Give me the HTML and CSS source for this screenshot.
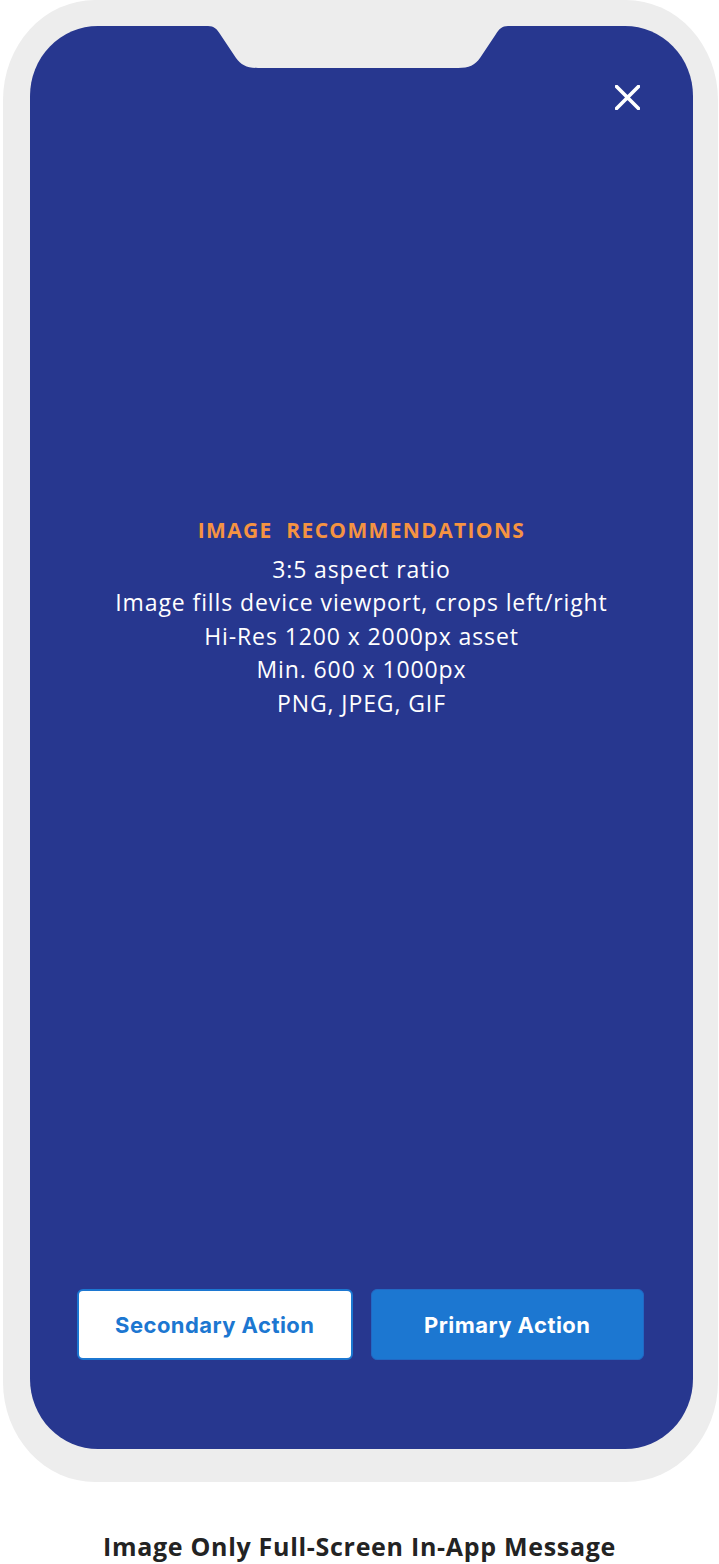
FILE: index.html
```html
<!DOCTYPE html>
<html lang="en">
<head>
<meta charset="utf-8">
<title>Image Only Full-Screen In-App Message</title>
<link rel="stylesheet" href="styles.css">
</head>
<body>
<div class="page">
  <div class="phone">
    <div class="screen">
      <svg class="notch" width="316" height="42" viewBox="0 0 316 42" aria-hidden="true">
        <path d="M0,0 H8 C14,0 17,3 20,8 L36,32 C41,39 47,42 58,42 H258 C269,42 275,39 280,32 L296,8 C299,3 302,0 308,0 H316 V-2 H0 Z" fill="#ededed"/>
      </svg>
      <div class="close-row">
        <svg class="close" width="25" height="25" viewBox="0 0 25 25" aria-label="Close">
          <path d="M1.5,1.5 L23.5,23.5 M23.5,1.5 L1.5,23.5" stroke="#ffffff" stroke-width="3.6" stroke-linecap="square" fill="none"/>
        </svg>
      </div>
      <div class="info">
        <div class="info-title">IMAGE&nbsp; RECOMMENDATIONS</div>
        <div class="info-lines">
          <div>3:5 aspect ratio</div>
          <div>Image fills device viewport, crops left/right</div>
          <div>Hi-Res 1200 x 2000px asset</div>
          <div>Min. 600 x 1000px</div>
          <div>PNG, JPEG, GIF</div>
        </div>
      </div>
      <div class="actions">
        <button class="btn btn-secondary">Secondary Action</button>
        <button class="btn btn-primary">Primary Action</button>
      </div>
    </div>
  </div>
  <div class="caption">Image Only Full-Screen In-App Message</div>
</div>
</body>
</html>
```

FILE: styles.css
```css
html, body {
  margin: 0;
  padding: 0;
  background: #ffffff;
}

.page {
  width: 719px;
  height: 1564px;
  display: flex;
  flex-direction: column;
  align-items: flex-start;
}

.phone {
  box-sizing: border-box;
  margin-left: 3px;
  width: 715px;
  height: 1482px;
  background: #ededed;
  border-radius: 92px / 100px;
  padding: 26px 25px 33px 27px;
  display: flex;
}

.screen {
  position: relative;
  flex: 1;
  background: #27378f;
  border-radius: 68px / 70px;
  display: flex;
  flex-direction: column;
  overflow: hidden;
}

.notch {
  position: absolute;
  top: 0;
  left: 170px;
  display: block;
}

.close-row {
  display: flex;
  justify-content: flex-end;
  padding: 59px 53px 0 0;
}

.close {
  display: block;
}

.info {
  margin-top: 408px;
  display: flex;
  flex-direction: column;
  align-items: center;
  text-align: center;
  font-family: "Open Sans", "Lato", sans-serif;
}

.info-title {
  color: #f59342;
  font-size: 21px;
  line-height: 24px;
  font-weight: 700;
  letter-spacing: 1.35px;
}

.info-lines {
  margin-top: 11px;
  color: #ffffff;
  font-size: 23px;
  line-height: 33.4px;
  font-weight: 400;
  letter-spacing: 0.9px;
}

.actions {
  margin-top: auto;
  margin-bottom: 89px;
  padding: 0 49px 0 47px;
  display: flex;
  gap: 18px;
}

.btn {
  flex: 1;
  box-sizing: border-box;
  height: 71px;
  border-radius: 6px;
  font-family: "Inter", "Roboto", sans-serif;
  font-size: 22px;
  font-weight: 700;
  letter-spacing: 0.45px;
  cursor: pointer;
  padding: 0;
}

.btn-secondary {
  background: #ffffff;
  color: #1c77d1;
  border: 2px solid #1c77d1;
}

.btn-primary {
  background: #1c77d1;
  color: #ffffff;
  border: 1px solid #2268c4;
}

.caption {
  align-self: stretch;
  margin-top: 49px;
  text-align: center;
  font-family: "Open Sans", "Lato", sans-serif;
  font-size: 25px;
  line-height: 30px;
  font-weight: 700;
  letter-spacing: 0.7px;
  color: #232323;
}
```
